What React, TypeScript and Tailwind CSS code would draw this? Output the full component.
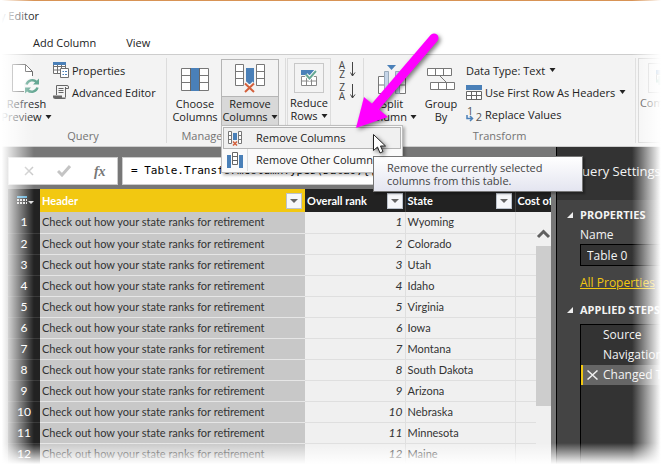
import type { ReactNode } from "react";

const caret = (
  <svg width="7" height="4" viewBox="0 0 7 4" className="inline-block shrink-0" aria-hidden="true">
    <path d="M0.500 0h6L3.500 4z" fill="#222" />
  </svg>
);

function Svg({ w, h, children }: { w: number; h: number; children: ReactNode }) {
  return (
    <svg width={w} height={h} viewBox={`0 0 ${w} ${h}`} fill="none" className="shrink-0" aria-hidden="true">
      {children}
    </svg>
  );
}

const RefreshIcon = () => (
  <Svg w={28} h={30}>
    <path d="M20.500 12V7.500L13.500 0.500H0.500V27.500H12M13.500 0.500V7.500H20.500" stroke="#666" fill="#fff" />
    <circle cx="20" cy="22" r="8" fill="#f7f7f7" />
    <path d="M14.500 20.500a6 6 0 0 1 10-2.500M25.500 23.500a6 6 0 0 1-10 2.500" stroke="#66a894" strokeWidth="2.500" />
    <path d="M27 14.500v6h-6zM13 29.500v-6h6z" fill="#66a894" />
  </Svg>
);

const PropertiesIcon = () => (
  <Svg w={16} h={16}>
    <path d="M0.500 0.500h12v11H0.500zM0.500 4.500h12M0.500 8h7M4.500 3v8.500M8.500 3v3" stroke="#707070" fill="#fff" />
    <path d="M0 0h13v3H0z" fill="#4a80b8" />
    <path d="M7.500 6.500h8v9h-8z" stroke="#707070" fill="#fff" />
    <path d="M9.500 9.500h1.500M12 9.500h2M9.500 12.500h1.500M12 12.500h2" stroke="#4a80b8" />
  </Svg>
);

const ScriptIcon = () => (
  <Svg w={16} h={15}>
    <path d="M3.500 10V0.500h10.500a1.500 1.500 0 0 1 1.500 1.500v1.500h-3M12.500 2v10.500" stroke="#666" />
    <path d="M5.500 3.500h5M5.500 5.500h5M5.500 7.500h5" stroke="#666" />
    <path d="M0 10.500h9v2h3.500V14H2.500A2.500 2.500 0 0 1 0 11.500z" fill="#666" />
  </Svg>
);

const ChooseIcon = () => (
  <Svg w={28} h={23}>
    <path d="M0.500 0.500h27v22H0.500zM0.500 7.500h27M0.500 14.500h27" stroke="#777" fill="#fff" />
    <path d="M9 0h10v23H9z" fill="#4a80b8" />
    <path d="M9.500 0v23M18.500 0v23" stroke="#666" />
  </Svg>
);

const RemoveIcon = () => (
  <Svg w={30} h={29}>
    <path d="M0.500 0.500h8v21h-8zM0.500 7.500h8M0.500 14.500h8M21.500 0.500h8v21h-8zM21.500 7.500h8M21.500 14.500h8" stroke="#777" fill="#fff" />
    <path d="M11 4h8v16h-8z" fill="#4a80b8" />
    <path d="M10 19l9 9M19 19l-9 9" stroke="#f3f3f3" strokeWidth="4" />
    <path d="M10 19.500l9 8.500M19 19.500l-9 8.500" stroke="#d4603c" strokeWidth="2" />
  </Svg>
);

const ReduceIcon = () => (
  <Svg w={17} h={16}>
    <path d="M0.500 6.500h15v9h-15zM0.500 11h15M5.500 6.500v9M10.500 6.500v9" stroke="#888" fill="#fff" />
    <path d="M0 0h14v5H0z" fill="#4a80b8" />
    <path d="M5 4.500l3.500 4L15 1" stroke="#fff" strokeWidth="4" />
    <path d="M5 4.500l3.500 4L15 1" stroke="#66a894" strokeWidth="2" />
  </Svg>
);

function SortIcon({ top, bottom }: { top: string; bottom: string }) {
  return (
    <span className="flex items-center gap-1">
      <span className="flex w-2 flex-col items-center text-[10px] leading-[9px] text-[#444]">
        <span>{top}</span>
        <span>{bottom}</span>
      </span>
      <Svg w={6} h={16}>
        <path d="M2.500 0v14M0.500 10.500L2.500 14L5 10.500" stroke="#444" />
      </Svg>
    </span>
  );
}

const SplitIcon = () => (
  <Svg w={28} h={29}>
    <path d="M9 0h9l-4.500 5z" fill="#4a80b8" />
    <path d="M0.500 11.500h7v17h-7zM0.500 20h7M20.500 11.500h7v17h-7zM20.500 20h7" stroke="#777" fill="#fff" />
    <path d="M6.500 6.500h4v22h-4zM17.500 6.500h4v22h-4z" stroke="#9ab" fill="#c5d5e8" />
  </Svg>
);

const GroupIcon = () => (
  <Svg w={28} h={23}>
    <path d="M0.500 0.500h24v7h-24zM8.500 0.500v7M16.500 0.500v7M3.500 14.500h24v7h-24zM11.500 14.500v7M19.500 14.500v7M12.500 7.500l7 7" stroke="#777" fill="#fff" />
  </Svg>
);

const HeadersIcon = () => (
  <Svg w={16} h={15}>
    <path d="M0.500 6.500h15v8h-15zM0.500 10.500h15M5.500 6.500v8M10.500 6.500v8" stroke="#666" fill="#fff" />
    <path d="M0 0h16v5H0z" fill="#4a80b8" />
  </Svg>
);

const ReplaceIcon = () => (
  <span className="relative flex h-4 w-4 shrink-0 justify-between text-[11px] leading-[10px] text-[#555]">
    <span className="pl-px">1</span>
    <span className="self-end">2</span>
    <svg width="8" height="7" viewBox="0 0 8 7" className="absolute bottom-0 left-0" fill="none" aria-hidden="true">
      <path d="M1 0v3.500h5M4 1l2.500 2.500L4 6" stroke="#4a80b8" strokeWidth="1.500" />
    </svg>
  </span>
);

const CombineIcon = () => (
  <Svg w={16} h={16}>
    <path d="M0 0h14v4H0z" fill="#4a80b8" />
    <path d="M0.500 4.500h13v6h-13z" stroke="#777" />
    <path d="M4 6v9M0 11h9" stroke="#66a894" strokeWidth="3" />
  </Svg>
);

const MenuRemoveIcon = () => (
  <Svg w={14} h={15}>
    <path d="M0.500 0.500h3v12h-3zM0.500 4.500h3M0.500 8.500h3M10.500 0.500h3v12h-3zM10.500 4.500h3M10.500 8.500h3" stroke="#777" fill="#fff" />
    <path d="M5 2h4v7H5z" fill="#4a80b8" />
    <path d="M5 10.500l4 4M9 10.500l-4 4" stroke="#d4603c" strokeWidth="1.500" />
  </Svg>
);

const MenuOtherIcon = () => (
  <Svg w={16} h={16}>
    <path d="M0 3h4v13H0zM12 3h4v13h-4z" fill="#4a80b8" />
    <path d="M5.500 0.500h5v12h-5zM5.500 4.500h5M5.500 8.500h5" stroke="#666" fill="#fff" />
  </Svg>
);

function BigButton({ icon, a, b, drop }: { icon: ReactNode; a: string; b: string; drop?: boolean }) {
  return (
    <button type="button" className="flex min-w-12 flex-col items-center">
      <span className="flex h-9 items-center">{icon}</span>
      <span>{a}</span>
      <span className="flex items-center gap-[3px] whitespace-nowrap">{b}{drop && caret}</span>
    </button>
  );
}

function SmallButton({ icon, text, drop }: { icon?: ReactNode; text: string; drop?: boolean }) {
  return (
    <button type="button" className="flex h-[22px] items-center gap-[3px] whitespace-nowrap">
      {icon}
      {text}
      {drop && <span className="flex pl-px">{caret}</span>}
    </button>
  );
}

function Group({ label, className, children }: { label?: string; className: string; children: ReactNode }) {
  return (
    <section className={`flex shrink-0 flex-col border-r border-[#dcdcdc] ${className}`}>
      <div className="flex h-[73px] items-start">{children}</div>
      {label && <h2 className="text-center leading-[14px] text-[#737373]">{label}</h2>}
    </section>
  );
}

function Ribbon() {
  return (
    <div className="flex h-[93px] overflow-hidden border-y border-[#cdcdcd] bg-[#f3f3f3] pt-[3px] pb-[3px] leading-[13px]">
      <Group label="Query" className="w-[167px]">
        <div className="flex w-[53px] justify-center pt-[3px]">
          <BigButton icon={<RefreshIcon />} a="Refresh" b="Preview" drop />
        </div>
        <div className="pt-px">
          <SmallButton icon={<PropertiesIcon />} text="Properties" />
          <SmallButton icon={<ScriptIcon />} text="Advanced Editor" />
        </div>
      </Group>
      <Group label="Manage Columns" className="w-[119px]">
        <div className="w-[54px] pt-[3px] pl-1">
          <BigButton icon={<ChooseIcon />} a="Choose" b="Columns" />
        </div>
        <button type="button" className="mt-px flex h-[67px] w-[58px] flex-col items-center border border-[#b5b5b5]">
          <span className="flex h-[37px] w-full items-center justify-center border-b border-[#b5b5b5]"><RemoveIcon /></span>
          <span className="flex w-full flex-1 flex-col items-center bg-[#d8d8d8]">
            <span>Remove</span>
            <span className="flex items-center gap-[3px]">Columns{caret}</span>
          </span>
        </button>
      </Group>
      <Group className="w-[78px]">
        <button type="button" className="ml-px flex h-[69px] w-[44px] flex-col items-center border border-[#dcdcdc] pt-1">
          <span className="mb-[3px] flex h-[30px] w-[30px] items-center justify-center border border-[#c8c8c8]"><ReduceIcon /></span>
          <span>Reduce</span>
          <span className="flex items-center gap-[3px]">Rows{caret}</span>
        </button>
        <div className="flex flex-col gap-1 pt-[3px] pl-[7px]">
          <button type="button" aria-label="Sort ascending"><SortIcon top="A" bottom="Z" /></button>
          <button type="button" aria-label="Sort descending"><SortIcon top="Z" bottom="A" /></button>
        </div>
      </Group>
      <Group label="Transform" className="w-[272px]">
        <div className="flex w-[102px] shrink-0 pt-[3px] pl-[3px]">
          <BigButton icon={<SplitIcon />} a="Split" b="Column" drop />
          <BigButton icon={<GroupIcon />} a="Group" b="By" />
        </div>
        <div className="pt-px">
          <SmallButton text="Data Type: Text" drop />
          <SmallButton icon={<HeadersIcon />} text="Use First Row As Headers" drop />
          <SmallButton icon={<ReplaceIcon />} text="Replace Values" />
        </div>
      </Group>
      <button type="button" className="ml-[2px] flex h-full w-[50px] shrink-0 flex-col items-center border border-[#d0d0d0] pt-1">
        <span className="mb-[3px] flex h-[30px] w-[30px] items-center border border-[#c8c8c8] pl-[7px]"><CombineIcon /></span>
        <span>Combine</span>
        {caret}
      </button>
    </div>
  );
}

function RemoveMenu() {
  return (
    <div role="menu" className="absolute top-[125px] left-[221px] w-[182px] border border-[#bdbdbd] bg-[#fafafa] p-px shadow-[2px_2px_3px_rgba(0,0,0,0.3)]">
      <button role="menuitem" type="button" className="flex h-[22px] w-full items-center border border-[#b5b5b5] bg-[#f0f0f0] pl-1">
        <span className="flex w-[28px]"><MenuRemoveIcon /></span>
        Remove Columns
      </button>
      <button role="menuitem" type="button" className="flex h-[22px] w-full items-center pl-1">
        <span className="mr-[8px] flex h-full w-[21px] shrink-0 items-center border-r border-[#ddd]"><MenuOtherIcon /></span>
        Remove Other Columns
      </button>
    </div>
  );
}

const states = ["Wyoming", "Colorado", "Utah", "Idaho", "Virginia", "Iowa", "Montana", "South Dakota", "Arizona", "Nebraska", "Minnesota", "Maine"];

function Filter({ label }: { label: string }) {
  return (
    <button type="button" aria-label={`Filter ${label}`} className="flex h-4 w-4 shrink-0 items-center justify-center border border-[#bbc2cc] bg-[#f6f7fa]">
      <svg width="8" height="4" viewBox="0 0 8 4" aria-hidden="true"><path d="M0 0h8L4 4z" fill="#666" /></svg>
    </button>
  );
}

function DataTable() {
  return (
    <table className="w-full table-fixed border-collapse font-[Lato,sans-serif] text-[11px] leading-[14px] text-[#333]">
      <colgroup>
        <col className="w-[32px]" /><col className="w-[265px]" /><col className="w-[100px]" /><col className="w-[110px]" /><col />
      </colgroup>
      <thead className="text-white">
        <tr className="h-[23px] bg-[#222]">
          <th className="p-0">
            <svg width="18" height="10" viewBox="0 0 18 10" className="ml-[9px]" role="img" aria-label="Table options">
              <path d="M0 0h10v2H0z" fill="#4fa9d8" />
              <path d="M0 3h2v2H0zM3 3h2v2H3zM6 3h2v2H6zM9 3h1v2H9zM0 6h2v2H0zM3 6h2v2H3zM6 6h2v2H6zM9 6h1v2H9zM11 5h6l-3 3z" fill="#ddd" />
            </svg>
          </th>
          <th className="bg-[#f2c811] p-0 pr-[3px] pl-[2px]"><span className="flex items-center justify-between">Header<Filter label="Header" /></span></th>
          <th className="p-0 pr-[2px] pl-[2px]"><span className="flex items-center justify-between whitespace-nowrap">Overall rank<Filter label="Overall rank" /></span></th>
          <th className="border-l border-[#444] p-0 pr-[3px] pl-[2px]"><span className="flex items-center justify-between">State<Filter label="State" /></span></th>
          <th className="border-l border-[#444] p-0 pl-[2px] text-left whitespace-nowrap">Cost of</th>
        </tr>
      </thead>
      <tbody>
        {states.map((s, i) => (
          <tr key={s} className="h-[21px] border-b border-[#dfdfdf]">
            <th className="border-b border-[#3a3a3a] bg-[#222] p-0 text-center text-[12px] font-normal text-white">{i + 1}</th>
            <td className="border-b border-[#e6e6e6] bg-[#c8c8c8] p-0 pl-[2px] whitespace-nowrap">Check out how your state ranks for retirement</td>
            <td className="border-r border-[#dfdfdf] p-0 pr-[2px] text-right text-[12px] italic">{i + 1}</td>
            <td className="border-r border-[#dfdfdf] p-0 pl-[2px]">{s}</td>
            <td className="p-0" />
          </tr>
        ))}
      </tbody>
    </table>
  );
}

const triangle = <svg width="6" height="6" viewBox="0 0 6 6" className="shrink-0" aria-hidden="true"><path d="M6 0v6H0z" fill="#eee" /></svg>;

function Settings() {
  return (
    <aside className="flex w-[108px] shrink-0 flex-col overflow-hidden border-l border-black bg-[#444] text-[12px] text-[#f3f3f3]">
      <h2 className="h-[53px] shrink-0 bg-[#333] pt-[14px] pl-[15px] text-[13px] leading-[20px] whitespace-nowrap">Query Settings</h2>
      <div className="flex flex-1 flex-col pt-[8px] pl-[10px]">
        <h3 className="flex items-center gap-[7px] text-[11px] leading-[14px] font-bold">{triangle}PROPERTIES</h3>
        <div className="flex flex-col pl-[13px]">
          <label htmlFor="name" className="pt-[5px] leading-[16px]">Name</label>
          <input id="name" defaultValue="Table 0" className="mt-px h-[22px] w-[120px] border border-black bg-[#333] px-[6px]" />
          <a href="#all" className="mt-[9px] leading-[16px] text-[#f2c811] underline">All Properties</a>
        </div>
        <h3 className="mt-3 flex items-center gap-[7px] text-[11px] leading-[14px] font-bold whitespace-nowrap">{triangle}APPLIED STEPS</h3>
        <ul className="mt-[7px] ml-[13px] w-[120px] flex-1 border-t border-l border-black bg-[#333] leading-[20px]">
          <li className="pl-[22px]">Source</li>
          <li className="pl-[22px]">Navigation</li>
          <li className="flex items-center border-l-2 border-[#f2c811] bg-[#666] whitespace-nowrap">
            <button type="button" aria-label="Delete step" className="flex w-5 pl-1">
              <svg width="11" height="10" viewBox="0 0 11 10" fill="none" aria-hidden="true"><path d="M0.500 0.500l10 9M10.500 0.500l-10 9" stroke="#eee" strokeWidth="1.500" /></svg>
            </button>
            Changed Type
          </li>
        </ul>
      </div>
    </aside>
  );
}

export default function App() {
  return (
    <div className="relative h-screen overflow-hidden bg-white font-['Open_Sans',sans-serif] text-[11px] text-[#222]">
      <div className="flex h-full flex-col">
        <header className="shrink-0 border-t border-[#d89355]">
          <h1 className="flex h-[31px] items-center">y Editor</h1>
          <nav className="flex h-[22px] gap-[30px] pl-[33px] leading-[22px]">
            <button type="button">Add Column</button>
            <button type="button">View</button>
          </nav>
          <Ribbon />
        </header>
        <div className="flex min-h-0 flex-1 bg-[#777]">
          <main className="flex min-w-0 flex-1 flex-col pt-[10px] pr-[5px] pl-2">
            <div className="flex h-[28px] shrink-0 gap-1">
              <div className="flex w-[110px] items-center justify-around border border-[#ccc] bg-white pl-1">
                <svg width="10" height="10" viewBox="0 0 10 10" fill="none" role="img" aria-label="Cancel"><path d="M1 1l8 8M9 1l-8 8" stroke="#c8c8c8" strokeWidth="1.500" /></svg>
                <svg width="14" height="12" viewBox="0 0 14 12" fill="none" role="img" aria-label="Accept"><path d="M1 6l4 4L13 1" stroke="#c4c4c4" strokeWidth="3" /></svg>
                <span className="font-['Liberation_Serif',serif] text-[14px] font-bold text-[#777] italic">fx</span>
              </div>
              <input aria-label="Formula" defaultValue={'= Table.TransformColumnTypes(Data0,{{"Header", type text}})'} className="min-w-0 flex-1 border border-[#ccc] bg-white px-2 font-['DejaVu_Sans_Mono',monospace] text-[11px] text-black" />
            </div>
            <div className="relative mt-1 min-h-0 flex-1 overflow-hidden bg-[#f0f0f0]">
              <DataTable />
              <div className="absolute top-[36px] right-0 bottom-0 flex w-[15px] flex-col bg-[#f0f0f0]">
                <svg width="15" height="21" viewBox="0 0 15 21" fill="none" aria-hidden="true"><path d="M2 12l5.500-5.500L13 12" stroke="#606060" strokeWidth="3" /></svg>
                <div className="h-[160px] bg-[#cdcdcd]" />
              </div>
            </div>
          </main>
          <Settings />
        </div>
      </div>

      <RemoveMenu />
      <div role="tooltip" className="absolute top-[156px] left-[373px] w-[210px] border border-[#767676] bg-linear-to-b from-white to-[#e4e5f0] py-[4px] pl-[13px] leading-[13px] text-[#444] shadow-[2px_2px_2px_rgba(0,0,0,0.3)]">
        Remove the currently selected<br />columns from this table.
      </div>
      <svg width="100" height="130" viewBox="345 30 100 130" fill="none" className="pointer-events-none absolute top-[30px] left-[345px] drop-shadow-[2px_2px_2px_rgba(0,0,0,0.5)]" aria-hidden="true">
        <path d="M434 38L375 107" stroke="#ff00ff" strokeWidth="9" strokeLinecap="round" />
        <path d="M356 128L364 97L388 117z" fill="#ff00ff" />
        <path d="M373.500 134.500v16l4-3.500l2.500 6l3-1.500l-2.500-5.500h5z" fill="#fff" stroke="#222" />
      </svg>

      <div className="pointer-events-none absolute inset-y-0 left-0 w-[34px] bg-linear-to-r from-white from-5% to-transparent" />
      <div className="pointer-events-none absolute inset-y-0 right-0 w-[32px] bg-linear-to-l from-white from-10% to-transparent" />
      <div className="pointer-events-none absolute inset-x-0 bottom-0 h-[25px] bg-linear-to-t from-white from-15% to-transparent" />
    </div>
  );
}
